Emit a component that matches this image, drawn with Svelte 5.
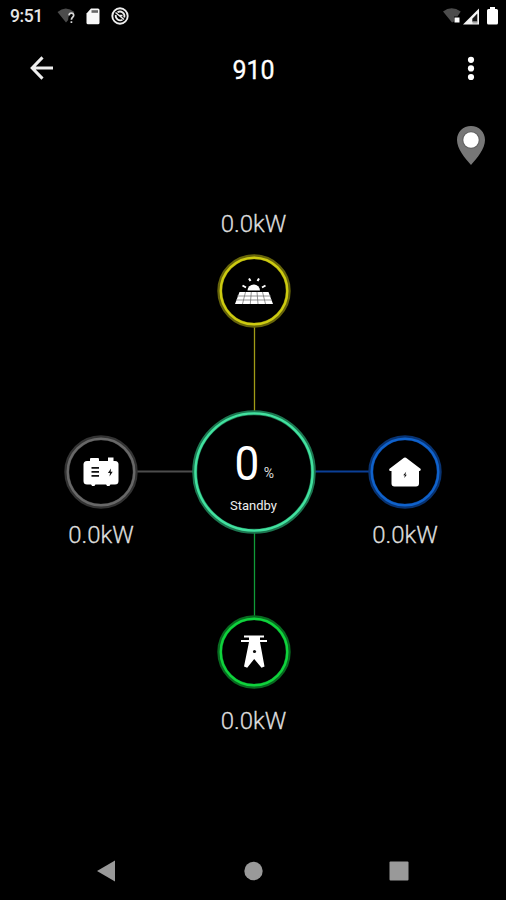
<script lang="ts">
	let title = '910';
	let time = '9:51';
	let charge = 0;
	let status = 'Standby';

	const nodes = [
		{ id: 'solar', x: 253.5, y: 291, labelY: 224, power: '0.0kW' },
		{ id: 'generator', x: 101, y: 471.5, labelY: 535, power: '0.0kW' },
		{ id: 'home', x: 405, y: 471.5, labelY: 535, power: '0.0kW' },
		{ id: 'grid', x: 253.5, y: 652, labelY: 720.5, power: '0.0kW' }
	];

	// the flow area starts below the status bar, header and pin row
	const offset = 180;
</script>

<div class="screen">
	<div class="status-bar">
		<div class="status-left">
			<span class="time">{time}</span>
			<svg class="wifi" width="20" height="18" viewBox="0 0 20 18">
				<path d="M.5 5Q8.500-2 17.500 5L16 6.500Q11 7 11.200 13L9 15.500z" fill="#4c4c4c" />
				<path d="M12 8.400Q12.200 6.200 14.400 6.200T16.700 8.300C16.700 10 14.400 10.200 14.400 12.700M14.400 14.200v1.800" fill="none" stroke="#d8d8d8" stroke-width="1.700" />
			</svg>
			<svg class="sd" width="14" height="17" viewBox="0 0 14 17">
				<path d="M5 .5h7q1.500 0 1.500 1.500v12.700q0 1.500-1.500 1.500H2Q.5 16.200.5 14.700V5.500z" fill="#f8f8f8" />
				<path d="M5.500 3.500h6.500" stroke="#666" stroke-width="2.600" />
			</svg>
			<svg class="sync" width="18" height="18" viewBox="0 0 18 18" fill="none" stroke="#eee">
				<circle cx="9" cy="9" r="7.700" stroke-width="1.900" />
				<path d="M4.800 8A4.500 4.500 0 0 0 11.500 12.700M6.500 5.300A4.500 4.500 0 0 1 13.200 10.500" stroke-width="1.800" />
				<path d="M4.500 5.500L13 12.500M8 8.500h3.500" stroke-width="1.500" />
			</svg>
		</div>
		<div class="status-right">
			<svg width="18" height="18" viewBox="0 0 18 18">
				<path d="M0 4.600Q8.500-2 17.700 4.600L14.500 9.500H11v5L9 15.500z" fill="#4c4c4c" />
				<rect x="11.500" y="10.500" width="5" height="5" fill="#fff" />
			</svg>
			<svg width="17" height="17" viewBox="0 0 17 17">
				<path d="M0 16.500L16 .5v16z" fill="#f4f4f4" />
				<path d="M14.300 5.500v8.200h-5v-3z" fill="#151515" />
				<path d="M9.500 13.500h5v2h-5z" fill="#aaa" />
			</svg>
			<svg class="battery" width="11" height="18" viewBox="0 0 11 18">
				<path d="M3 0h5v2h1.500Q11 2 11 3.500v12.500q0 1.500-1.500 1.500h-8Q0 17.500 0 16V3.500Q0 2 1.500 2H3z" fill="#fff" />
			</svg>
		</div>
	</div>

	<header class="header">
		<button class="icon-btn" aria-label="Back">
			<svg width="24" height="24" viewBox="0 0 24 24" fill="none" stroke="#eee" stroke-width="3">
				<path d="M12.500 1.400L2.200 12l10.300 10.600M2.500 12h20.500" />
			</svg>
		</button>
		<h1>{title}</h1>
		<button class="icon-btn more" aria-label="More">
			<svg width="8" height="25" viewBox="0 0 8 25" fill="#fff">
				<circle cx="4" cy="3.800" r="3.100" />
				<circle cx="4" cy="12.400" r="3.100" />
				<circle cx="4" cy="21" r="3.100" />
			</svg>
		</button>
	</header>

	<div class="location">
		<svg width="30" height="41" viewBox="0 0 30 41">
			<path d="M15 1C7 1 1 7 1 15C1 24 9 33 15 40C21 33 29 24 29 15C29 7 23 1 15 1z" fill="#777" />
			<circle cx="15" cy="15" r="8.800" fill="#606060" />
			<circle cx="15" cy="15" r="7.700" fill="#fff" />
		</svg>
	</div>

	<main class="flow">
		<svg class="lines" width="506" height="660" viewBox="0 180 506 660" fill="none" stroke-width="1.300">
			<path d="M254.500 327v84" stroke="#a09b16" />
			<path d="M254.500 532v84" stroke="#109b38" />
			<path d="M137 471.500h56" stroke="#4c4c4c" stroke-width="1.800" />
			<path d="M314 471.500h56" stroke="#0b3f96" stroke-width="1.800" />
		</svg>

		{#each nodes as node}
			<span class="power" style="left: {node.x}px; top: {node.labelY - offset}px">{node.power}</span>
			<div class="node {node.id}" style="left: {node.x}px; top: {node.y - offset}px">
				<svg width="74" height="74" viewBox="-37 -37 74 74">
					<circle class="halo" r="34.200" />
					<circle class="ring" r="33.300" />
					{#if node.id === 'solar'}
						<g fill="#fff">
							<path d="M-6.500-.5A6.200 6 0 0 1 6-.5z" />
							<path d="M-14.500 1H14.500L19 13H-19z" />
						</g>
						<path d="M-5-12.500l1.500 2.500M5-12.500l-1.500 2.500M-11.500-5.500l3.500 2M11.500-5.500l-3.500 2" stroke="#fff" stroke-width="2" />
						<path d="M-17 5h34M-18 9h36" stroke="#777" stroke-width=".8" />
						<path d="M-8.500 1L-11.500 13M-2.700 1L-3.700 13M3 1L4 13M8.500 1L11.500 13" stroke="#666" stroke-width=".7" />
					{:else if node.id === 'generator'}
						<g fill="#fff">
							<rect x="-17.500" y="-11" width="35" height="23.500" rx="3.500" />
							<path d="M-11-11v-2q0-1 1-1h7q1 0 1 1v2zM7-11v-3.500h5.500v3.500zM-10 12h4.500l-1 2h-2.500zM5 12h4.500l-1 2H6z" />
						</g>
						<path d="M-9.500-4.200h7.500M-9.500-.2h7.500M-9.500 3.800h7.500" stroke="#111" stroke-width="1.800" />
						<path d="M10-3.500L6.900 1H9L8.500 4.500L11.700-.2H9.700z" fill="#111" />
					{:else if node.id === 'home'}
						<path d="M0-14.500Q1-14.500 2-13.500L15.800-3Q15.800-1 14.500-1H14v12.500q0 3-3 3h-21.500q-3 0-3-3V-1H-15Q-16-1-15.800-3L-2-13.500Q-1-14.500 0-14.500z" fill="#fff" />
						<path d="M1.200-.3L-1.800 3.300H-.2L-.7 6L1.800 2.800H.3z" fill="#111" />
					{:else}
						<path d="M-10-16.500h20v2H6v2.600H13v1.800H6L10.500 14.500L7.500 15.800L.2 7L-6.800 15.800L-10 14.500L-5-10.100H-13v-1.800H-5v-2.600h-5z" fill="#fff" />
						<circle cx=".5" cy="-.5" r="1.600" fill="#111" />
					{/if}
				</svg>
			</div>
		{/each}

		<div class="battery-node">
			<svg width="126" height="126" viewBox="-63 -63 126 126">
				<circle class="halo" r="59.300" />
				<circle class="ring" r="58.600" />
			</svg>
			<div class="battery-text">
				<div class="charge"><span class="value">{charge}</span><span class="unit">%</span></div>
				<div class="status">{status}</div>
			</div>
		</div>
	</main>

	<nav class="nav-bar">
		<svg width="18" height="22" viewBox="0 0 18 22"><path d="M0 11L18 .5v21z" fill="#999" /></svg>
		<svg class="home-btn" width="20" height="20" viewBox="0 0 20 20"><circle cx="11.500" cy="10" r="9.200" fill="#999" /></svg>
		<svg width="20" height="20" viewBox="0 0 20 20"><rect x=".5" y=".5" width="19" height="19" rx="1" fill="#999" /></svg>
	</nav>
</div>

<style>
	:global(body) {
		background: #000;
	}

	.screen {
		display: flex;
		flex-direction: column;
		width: 506px;
		height: 900px;
		background: #000;
		color: #fff;
		font-family: Roboto, 'Open Sans', sans-serif;
		overflow: hidden;
	}

	.screen > * {
		flex-shrink: 0;
		box-sizing: border-box;
	}

	.status-bar {
		display: flex;
		justify-content: space-between;
		height: 32px;
		padding: 0 8px 0 10px;
	}

	.status-left,
	.status-right {
		display: flex;
		align-items: center;
	}

	.time {
		width: 47px;
		font-size: 17.5px;
		font-weight: 500;
		letter-spacing: -0.4px;
		color: #e6e6e6;
	}

	.sd {
		margin-left: 9px;
	}

	.sync {
		margin-left: 11px;
	}

	.status-right {
		gap: 2px;
	}

	.battery {
		margin-left: 5px;
	}

	.header {
		display: grid;
		grid-template-columns: 60px 1fr 60px;
		align-items: center;
		height: 72px;
		padding: 0 5px 0 6px;
	}

	.header h1 {
		margin: 5px 0 0;
		text-align: center;
		font-size: 25px;
		font-weight: 400;
		line-height: 30px;
		-webkit-text-stroke: 0.3px #fff;
	}

	.icon-btn {
		display: flex;
		padding: 0 0 0 24px;
		border: none;
		background: none;
	}

	.icon-btn.more {
		padding: 0 0 0 26px;
	}

	.location {
		display: flex;
		justify-content: flex-end;
		height: 76px;
		padding: 21px 20px 0 0;
	}

	.flow {
		position: relative;
		height: 660px;
	}

	.lines {
		display: block;
	}

	.power {
		position: absolute;
		transform: translate(-50%, -50%);
		font-size: 24px;
		font-weight: 300;
		line-height: 28px;
		color: #ddd;
		-webkit-text-stroke: 0.3px #ddd;
	}

	.node,
	.battery-node {
		position: absolute;
		transform: translate(-50%, -50%);
	}

	.node svg,
	.battery-node svg {
		display: block;
	}

	.ring,
	.halo {
		fill: none;
		stroke: var(--ring);
	}

	.ring {
		stroke-width: 2.4px;
	}

	.halo {
		stroke: var(--halo);
		stroke-width: 5px;
	}

	.solar {
		--ring: #cdcb10;
		--halo: #66640a;
	}

	.generator {
		--ring: #686868;
		--halo: #333;
	}

	.home {
		--ring: #0f62cc;
		--halo: #083372;
	}

	.grid {
		--ring: #0fd33c;
		--halo: #086a20;
	}

	.battery-node {
		left: 253.5px;
		top: 291.5px;
		--ring: #42e2a0;
		--halo: #1c7650;
	}

	.battery-text {
		position: absolute;
		inset: 0;
		display: flex;
		flex-direction: column;
		align-items: center;
		padding-top: 27px;
	}

	.charge {
		font-size: 49px;
		line-height: 56px;
		height: 56px;
	}

	.value {
		display: inline-block;
		transform: scaleX(0.9);
	}

	.unit {
		position: relative;
		top: -2px;
		margin-left: 3px;
		font-size: 14px;
		color: #ddd;
	}

	.status {
		margin-top: 5px;
		font-size: 13px;
		line-height: 18px;
		color: #eee;
	}

	.nav-bar {
		display: flex;
		justify-content: space-between;
		align-items: center;
		height: 60px;
		padding: 2px 97px 0;
	}

	.home-btn {
		overflow: visible;
	}
</style>
